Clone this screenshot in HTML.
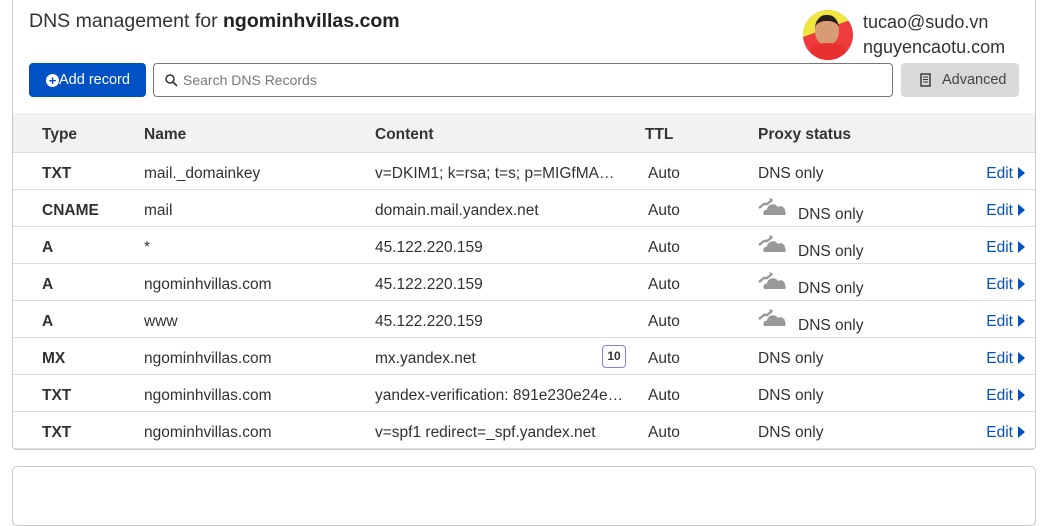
<!DOCTYPE html>
<html><head><meta charset="utf-8"><style>
*{box-sizing:border-box;margin:0;padding:0}
body{width:1057px;height:501px;background:#fff;font-family:"Liberation Sans",sans-serif;color:#313131;position:relative;overflow:hidden}
.card{position:absolute;left:12px;top:-10px;width:1024px;height:460px;border:1px solid #c8c8c8;border-top:none;border-radius:0 0 4px 4px}
.card2{position:absolute;left:12px;top:466px;width:1024px;height:60px;border:1px solid #c8c8c8;border-radius:5px}
.title{position:absolute;left:29px;top:10px;font-size:19.5px;color:#333}
.title b{color:#222}
.btn{position:absolute;left:29px;top:63px;width:117px;height:34px;background:#0051c3;border-radius:4px;color:#fff;font-size:14.5px;line-height:35px;padding-left:17px}
.search{position:absolute;left:153px;top:63px;width:740px;height:34px;border:1px solid #777;border-radius:4px;font-size:14px;color:#777;line-height:33px;padding-left:29px}
.adv{position:absolute;left:901px;top:63px;width:118px;height:34px;background:#d9d9d9;border-radius:4px;font-size:14.5px;color:#444;line-height:35px;padding-left:41px}
.av{position:absolute;left:803px;top:10px;width:50px;height:50px;border-radius:50%;background:#ef3b3b;overflow:hidden}
.user{position:absolute;left:863px;font-size:18px;color:#333}
.thead{position:absolute;left:13px;top:113px;width:1022px;height:40px;background:#f2f2f2;border-bottom:1px solid #ddd}
.row{position:absolute;left:13px;width:1022px;height:37px;border-bottom:1px solid #ddd;font-size:15.5px}
.c{position:absolute;top:2px;line-height:37px;white-space:nowrap}
.h{font-weight:bold;font-size:15.5px;line-height:40px;color:#333}
.edit{position:absolute;right:10px;top:2px;line-height:37px;color:#0051c3;font-size:15.5px}
.edit:after{content:"";display:inline-block;margin-left:5px;border-left:7px solid #0051c3;border-top:6px solid transparent;border-bottom:6px solid transparent;vertical-align:-1px}
.badge{position:absolute;left:589px;top:7px;width:24px;height:23px;border:1px solid #8a7fe0;border-radius:4px;font-size:12px;font-weight:bold;text-align:center;line-height:21px;color:#333}
</style></head><body>
<div class="card"></div><div class="card2"></div>
<div class="title">DNS management for <b>ngominhvillas.com</b></div>
<div class="av"><div style="position:absolute;left:0;top:0;width:50px;height:30px;background:#f0e640;clip-path:polygon(0 0,100% 0,100% 30%,0 90%)"></div><div style="position:absolute;left:12px;top:5px;width:24px;height:30px;border-radius:45%;background:#d79c74;border-top:6px solid #2a1e1a"></div><div style="position:absolute;left:6px;top:33px;width:38px;height:20px;border-radius:50% 50% 0 0;background:#e83030"></div></div>
<div class="user" style="top:12px">tucao@sudo.vn</div>
<div class="user" style="top:37px">nguyencaotu.com</div>
<div class="btn"><span style="display:inline-block;width:13px;height:13px;border-radius:50%;background:#fff;color:#0051c3;font-size:13px;line-height:13px;text-align:center;font-weight:bold;vertical-align:-1px">+</span>Add record</div>
<div class="search"><svg style="position:absolute;left:11px;top:10px" width="13" height="13" viewBox="0 0 13 13"><circle cx="5" cy="5" r="4" fill="none" stroke="#333" stroke-width="1.5"/><path d="M8 8l4 4" stroke="#333" stroke-width="1.6"/></svg>Search DNS Records</div>
<div class="adv"><svg style="position:absolute;left:19px;top:10px" width="11" height="14" viewBox="0 0 11 14"><rect x="1" y="1" width="9" height="12" fill="none" stroke="#333" stroke-width="1.4"/><path d="M3 4h5M3 6.5h5M3 9h5" stroke="#333"/></svg>Advanced</div>
<div class="thead">
<div class="c h" style="left:29px">Type</div><div class="c h" style="left:131px">Name</div><div class="c h" style="left:362px">Content</div><div class="c h" style="left:632px">TTL</div><div class="c h" style="left:745px">Proxy status</div>
</div>
<div id="rows"></div>
<script>
var d=[["TXT","mail._domainkey","v=DKIM1; k=rsa; t=s; p=MIGfMA…",0],["CNAME","mail","domain.mail.yandex.net",1],["A","*","45.122.220.159",1],["A","ngominhvillas.com","45.122.220.159",1],["A","www","45.122.220.159",1],["MX","ngominhvillas.com","mx.yandex.net",2],["TXT","ngominhvillas.com","yandex-verification: 891e230e24e…",0],["TXT","ngominhvillas.com","v=spf1 redirect=_spf.yandex.net",0]];
var cloud='<svg width="30" height="20" viewBox="0 0 30 20" style="position:absolute;left:0;top:6px"><path d="M1 12l5-4h3l5-4" fill="none" stroke="#999" stroke-width="2.4"/><path d="M11 2l4 1.5-2 3.5z" fill="#999"/><path d="M6 19a3.5 3.5 0 0 1 3-5.5a6 6 0 0 1 11-2.5a4.5 4.5 0 0 1 7 4a3 3 0 0 1 0 4z" fill="#999"/></svg>';
var h='';d.forEach(function(r,i){var y=153+i*37;
h+='<div class="row" style="top:'+y+'px"><div class="c" style="left:29px;font-weight:bold">'+r[0]+'</div><div class="c" style="left:131px">'+r[1]+'</div><div class="c" style="left:362px">'+r[2]+'</div>'+(r[3]==2?'<div class="badge">10</div>':'')+'<div class="c" style="left:635px">Auto</div>'+(r[3]==1?'<div class="c" style="left:745px;width:120px;top:0">'+cloud+'<span style="position:absolute;left:40px;top:6px">DNS only</span></div>':'<div class="c" style="left:745px">DNS only</div>')+'<div class="edit">Edit</div></div>';});
document.getElementById('rows').innerHTML=h;
</script>
</body></html>
